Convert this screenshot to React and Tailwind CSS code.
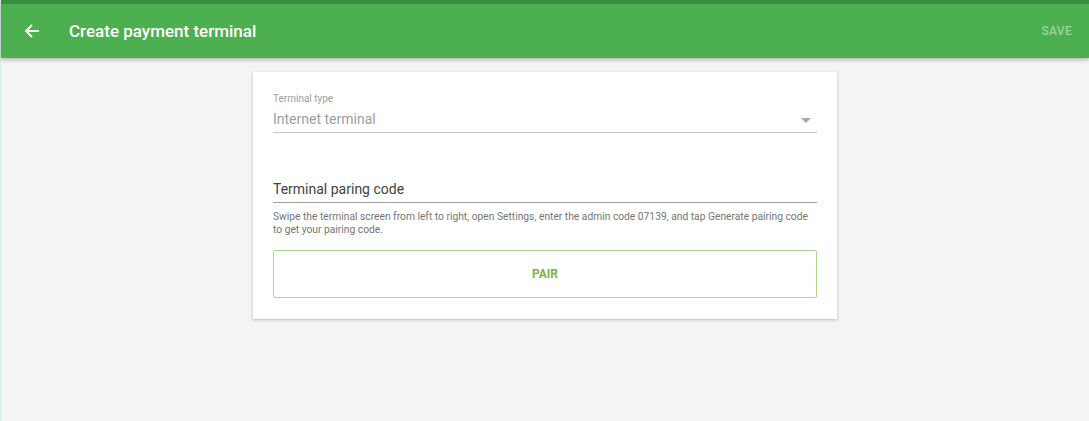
// Create payment terminal screen: app bar plus a single pairing form card.
const font = { fontFamily: "Roboto, 'Noto Sans', Arial, sans-serif" };

function BackArrow() {
  return (
    <svg width="16" height="16" viewBox="0 0 16 16" fill="none" stroke="white" strokeWidth="1.8">
      <path d="M15 8H2" />
      <path d="M8 2L2 8l6 6" />
    </svg>
  );
}

function AppBar() {
  return (
    <header className="border-t-4 border-[#3b8e3f] bg-[#4caf50] shadow-[0_2px_4px_rgba(0,0,0,0.25)] relative z-10">
      <div className="flex h-[54px] items-center pl-[19px] pr-[17px]">
        <button className="flex h-6 w-6 items-center justify-center">
          <BackArrow />
        </button>
        <h1 className="ml-[25px] mt-[1px] text-[17px] font-medium text-white">Create payment terminal</h1>
        <span className="ml-auto text-[12px] font-medium tracking-wide text-white/45">SAVE</span>
      </div>
    </header>
  );
}

function PairingCard() {
  return (
    <div className="w-[584px] bg-white px-5 pt-[21px] pb-[21px] shadow-[0_1px_3px_rgba(0,0,0,0.25)]">
      <label className="block text-[10px] leading-[12px] text-[#9e9e9e]">Terminal type</label>
      <div className="mt-1 flex items-center border-b border-[#c4c4c4] pb-[3px]">
        <span className="text-[14px] leading-[20px] text-[#9e9e9e]">Internet terminal</span>
        <span className="ml-auto mr-[6px] mt-[2px] h-0 w-0 border-x-[5px] border-t-[5px] border-x-transparent border-t-[#a8a8a8]" />
      </div>

      <div className="mt-[44px] border-b border-[#9e9e9e] pb-[1px]">
        <span className="text-[14px] leading-[20px] text-[#424242]">Terminal paring code</span>
      </div>
      <p className="mt-[7px] text-[10.25px] leading-[13px] text-[#757575]">
        Swipe the terminal screen from left to right, open Settings, enter the admin code 07139, and tap Generate pairing code
        to get your pairing code.
      </p>

      <button className="mt-[14px] flex h-12 w-full items-center justify-center rounded-[2px] border border-[#a9d68d] text-[12px] font-bold text-[#7cb342]">
        PAIR
      </button>
    </div>
  );
}

export default function App() {
  return (
    <div style={font} className="min-h-[421px] border-l border-l-[#d6efe2] bg-[#f4f4f4]">
      <AppBar />
      <main className="flex justify-center pt-[14px]">
        <PairingCard />
      </main>
    </div>
  );
}
